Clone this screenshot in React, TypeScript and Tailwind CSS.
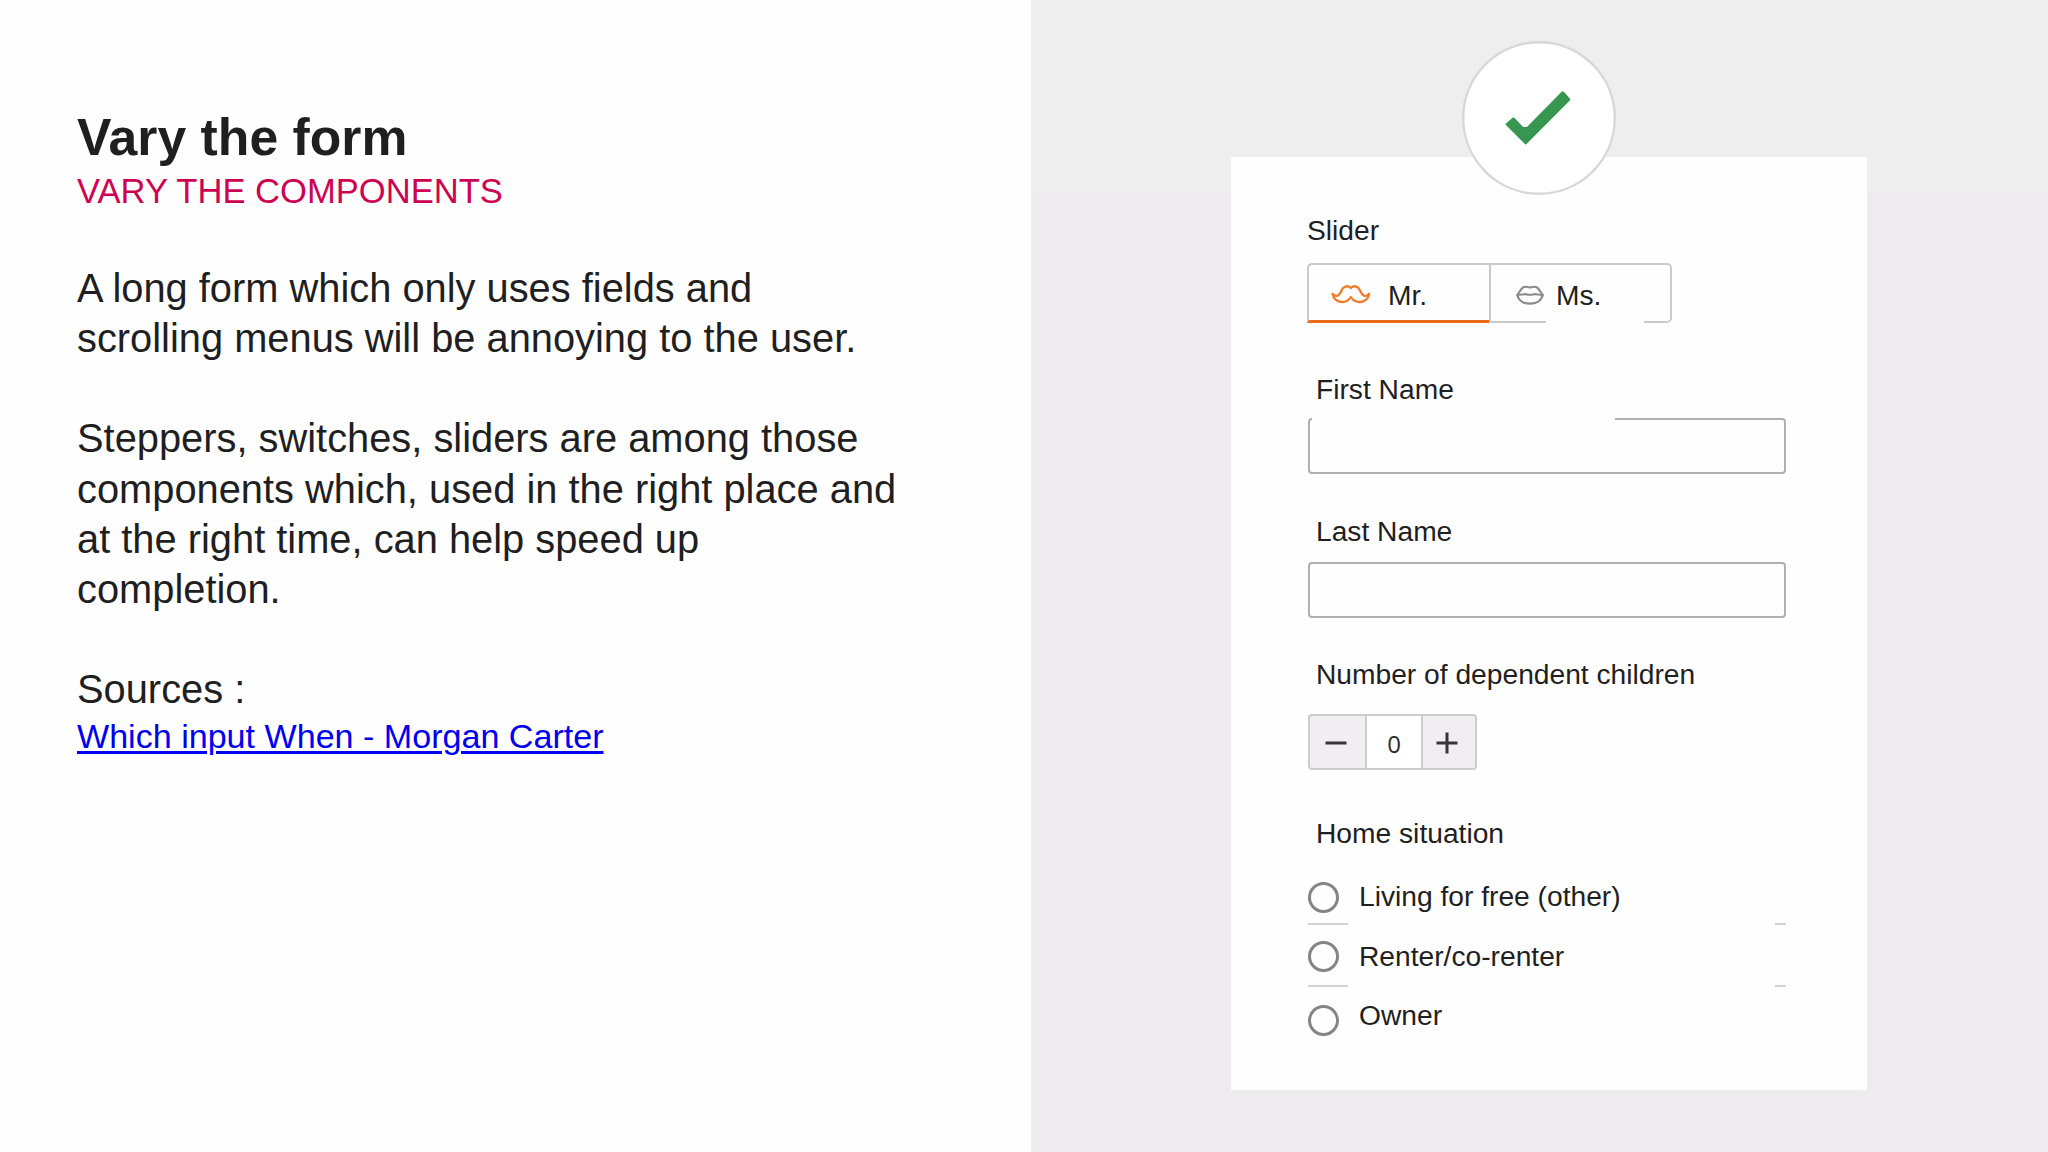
import React, { useState } from 'react';

const INTRO = ['A long form which only uses fields and', 'scrolling menus will be annoying to the user.'];
const DETAILS = ['Steppers, switches, sliders are among those', 'components which, used in the right place and', 'at the right time, can help speed up', 'completion.'];
const HOME_OPTIONS = [
  { label: 'Living for free (other)', row: 'h-[45px]', radio: 'mt-[2px]', text: 'mt-0' },
  { label: 'Renter/co-renter', row: 'h-[62px]', radio: 'mt-[16px]', text: 'mt-[15px]' },
  { label: 'Owner', row: 'h-[49px]', radio: 'mt-[18px]', text: 'mt-[12px]' },
];

function CheckBadge() {
  return (
    <div className="absolute left-[231px] -top-[116px] size-[154px]">
      <svg viewBox="0 0 154 154" className="size-full">
        <circle cx="77" cy="77" r="75.800" fill="#fff" stroke="#d8d6d9" strokeWidth="2.400" />
        <path d="M45.200 83.300 L51.500 78 L60.500 87.500 L65.500 87.500 L100.700 51.800 L106.700 58.500 L63.700 101.800 Z" fill="#37964f" stroke="#37964f" strokeWidth="3" strokeLinejoin="round" />
      </svg>
    </div>
  );
}

function MoustacheIcon() {
  return (
    <svg viewBox="0 0 40 20" className="w-10 h-5 mt-[3px] shrink-0" fill="none" stroke="#f27b2c" strokeWidth="2.300" strokeLinejoin="round" strokeLinecap="round">
      <path d="M1.500 9.800 C3 11.500 5 12.200 6.700 11.600 C10.500 10.200 9.500 5.800 12.800 3.500 C15.200 1.700 17.800 2 19.800 4 C21.800 2 24.400 1.700 26.800 3.500 C30 5.800 29.200 10.200 33 11.600 C34.800 12.200 36.700 11.500 38.200 9.800 C37.500 14.500 33.500 17.800 29 18 C24.500 18.200 22 16.500 19.800 13 C17.600 16.500 15.200 18.200 10.700 18 C6.200 17.800 2.300 14.500 1.500 9.800 Z" />
    </svg>
  );
}

function LipsIcon() {
  return (
    <svg viewBox="0 0 28 20" className="w-7 h-5 mt-[4px] shrink-0" fill="none" stroke="#8b8a8d" strokeWidth="2.200" strokeLinejoin="round" strokeLinecap="round">
      <path d="M1.300 10 C3.300 7.500 4.500 4.500 6.800 2.600 C8.500 1.400 11.500 1.700 14 2.500 C16.500 1.700 19.500 1.400 21.200 2.600 C23.500 4.500 24.700 7.500 26.700 10 C25.500 15.800 20 18.600 14 18.600 C8 18.600 2.500 15.800 1.300 10 Z" />
      <path d="M1.300 10 C5.500 10 7 9 10 9.200 C12.500 9.900 15.500 9.900 18 9.200 C21 9 22.500 10 26.700 10" />
    </svg>
  );
}

function Sign({ plus = false }: { plus?: boolean }) {
  return (
    <svg viewBox="0 0 22 22" className="size-[22px]" stroke="#37353a" strokeWidth="3">
      <path d={plus ? 'M.500 11 H21.500 M11 .500 V21.500' : 'M.500 11 H21.500'} />
    </svg>
  );
}

export default function App() {
  const [title, setTitle] = useState('Mr.');
  const [names, setNames] = useState({ first: '', last: '' });
  const [count, setCount] = useState(0);
  const [home, setHome] = useState('');

  return (
    <div className="flex w-[2048px] h-[1152px] overflow-hidden bg-[#fefefe] text-[#1f1f22] font-['Liberation_Sans',Arial,sans-serif]">
      <section className="w-[1031px] pl-[77px] pt-[107px]">
        <h1 className="text-[51.7px] leading-[60px] font-bold whitespace-nowrap">Vary the form</h1>
        <h2 className="text-[34.6px] leading-[48px] text-[#cd0452] whitespace-nowrap">VARY THE COMPONENTS</h2>
        <div className="mt-[48px] text-[39.85px] leading-[50.15px] whitespace-nowrap">
          {INTRO.map(l => <p key={l}>{l}</p>)}
          <br />
          {DETAILS.map(l => <p key={l}>{l}</p>)}
          <br />
          <p>Sources :</p>
        </div>
        <a href="#" className="block text-[34.1px] leading-[44px] text-[#0000ee] underline decoration-[2.5px] underline-offset-[3px] whitespace-nowrap">Which input When - Morgan Carter</a>
      </section>

      <section className="flex-1 bg-[linear-gradient(#eeeeee_192px,#eeecef_192px)] pt-[157px] pl-[200px]">
        <div className="relative w-[636px] h-[933px] bg-[#fefefe] pl-[76px] pt-[57px] text-[28.2px] leading-8">
          <CheckBadge />

          <div>Slider</div>
          <div className="mt-[17px] flex w-[365px] h-[60px]">
            <button onClick={() => setTitle('Mr.')} className={`flex items-center w-[183px] pl-[22px] border-t-2 border-l-2 rounded-tl-[5px] border-[#cac9cc] ${title === 'Mr.' ? 'border-b-[3px] border-b-[#ea6a17]' : ''}`}>
              <MoustacheIcon /><span className="ml-[17px] mt-[4px]">Mr.</span>
            </button>
            <button onClick={() => setTitle('Ms.')} className="relative flex items-center flex-1 pl-[25px] border-2 -ml-px rounded-r-[5px] border-[#cac9cc]">
              <LipsIcon /><span className="ml-[12px] mt-[3px]">Ms.</span>
              {/* break in the bottom rule */}
              <i className="absolute left-[55px] -bottom-[2px] w-[98px] h-[2px] bg-[#fefefe]" />
            </button>
          </div>

          <label htmlFor="first" className="block mt-[50px] pl-[9px]">First Name</label>
          <div className="relative mt-[13px] ml-[1px] w-[478px] h-14">
            <input id="first" value={names.first} onChange={e => setNames({ ...names, first: e.target.value })} className="block size-full px-3 border-2 border-[#b0afb2] rounded-[4px]" />
            <i className="absolute left-[4px] top-0 w-[303px] h-[2px] bg-[#fefefe]" />
          </div>

          <label htmlFor="last" className="block mt-[41px] pl-[9px]">Last Name</label>
          <input id="last" value={names.last} onChange={e => setNames({ ...names, last: e.target.value })} className="block mt-[15px] ml-[1px] w-[478px] h-14 px-3 border-2 border-[#b0afb2] rounded-[4px]" />

          <div className="mt-[40px] pl-[9px]">Number of dependent children</div>
          <div className="mt-6 ml-[1px] flex w-[169px] h-[56px] border-2 border-[#cccbce] rounded-[4px] bg-[#f0eef1]">
            <button onClick={() => setCount(c => Math.max(0, c - 1))} className="flex items-center justify-center w-[55px] pr-[3px] pt-[1px]"><Sign /></button>
            <output className="w-[58px] pt-[12px] border-x-2 border-[#cccbce] bg-white text-center text-[24px] leading-8 text-[#2b2a2d] font-['Open_Sans',sans-serif]">{count}</output>
            <button onClick={() => setCount(c => c + 1)} className="flex items-center justify-center flex-1 pr-[4px] pt-[1px]"><Sign plus /></button>
          </div>

          <div className="mt-[47px] pl-[9px]">Home situation</div>
          <div className="mt-[31px] ml-[1px] w-[478px]">
            {HOME_OPTIONS.map((o, i) => (
              <div key={o.label} onClick={() => setHome(o.label)} className={`flex flex-col justify-between ${o.row}`}>
                <div className="flex items-start">
                  <span className={`flex items-center justify-center size-[31px] rounded-full border-[3px] border-[#858487] ${o.radio}`}>
                    {home === o.label && <span className="size-4 rounded-full bg-[#ea6a17]" />}
                  </span>
                  <span className={`ml-[20px] ${o.text}`}>{o.label}</span>
                </div>
                {i < 2 && (
                  <div className="flex justify-between h-[2px]">
                    <i className="w-[40px] bg-[#d3d2d4]" />
                    <i className="w-[11px] bg-[#d3d2d4]" />
                  </div>
                )}
              </div>
            ))}
          </div>
        </div>
      </section>
    </div>
  );
}
